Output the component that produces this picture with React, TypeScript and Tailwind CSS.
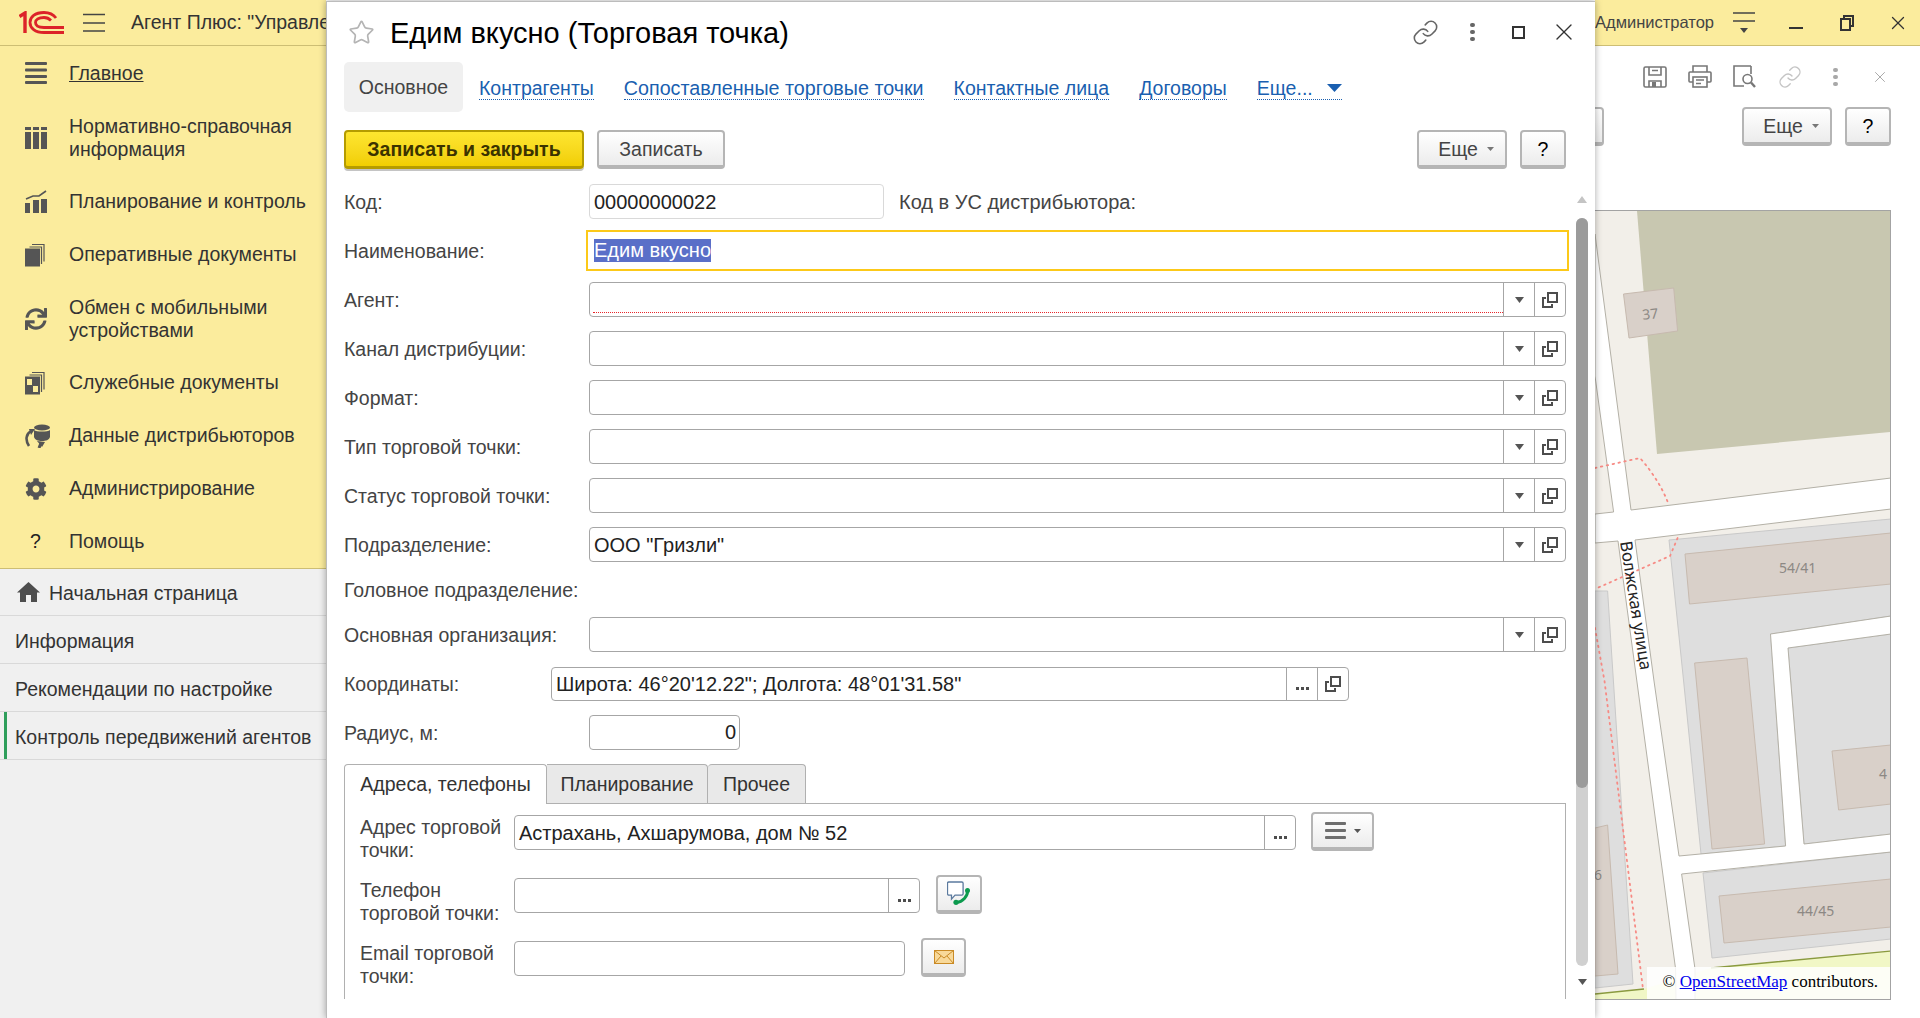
import { Link, Star, X } from "lucide-react";
import { FaCog, FaSync } from "react-icons/fa";

const DARK = "#555555";

function MainIcon() {
  return (
    <svg width="22" height="24" viewBox="0 0 22 24" fill={DARK}>
      <rect y="1" width="22" height="3" rx="1" />
      <rect y="7.5" width="22" height="3" rx="1" />
      <rect y="14" width="22" height="3" rx="1" />
      <rect y="20" width="22" height="3" rx="1" />
    </svg>
  );
}

function RefIcon() {
  return (
    <svg width="22" height="22" viewBox="0 0 22 22" fill={DARK}>
      <rect x="0" y="0" width="6" height="3" />
      <rect x="8" y="0" width="6" height="3" />
      <rect x="16" y="0" width="6" height="3" />
      <rect x="0" y="5" width="6" height="17" />
      <rect x="8" y="5" width="6" height="17" />
      <rect x="16" y="5" width="6" height="17" />
    </svg>
  );
}

function PlanIcon() {
  return (
    <svg width="22" height="24" viewBox="0 0 22 24" fill={DARK}>
      <path d="M0 13h5v10H0zM8 10h6v13H8zM16 9h6v14h-6z" />
      <path d="M1 9l7-3 6 0 7-5" fill="none" stroke={DARK} strokeWidth="1.6" />
    </svg>
  );
}

function DocsIcon({ squares }: { squares?: boolean }) {
  return (
    <svg width="20" height="24" viewBox="0 0 20 24" fill="none" stroke={DARK}>
      <path d="M7 1.5h12v17" strokeWidth="1.2" />
      <path d="M4.5 4h12v17" strokeWidth="1.2" />
      <rect x="0.5" y="6" width="14" height="17" fill={DARK} />
      {squares && <rect x="2" y="8" width="5" height="6" fill="#fbec9d" stroke="none" />}
      {squares && <rect x="8" y="15" width="5" height="6" fill="#fbec9d" stroke="none" />}
    </svg>
  );
}

function DistribIcon() {
  return (
    <svg width="26" height="24" viewBox="0 0 26 24" fill="none">
      <ellipse cx="17" cy="3.5" rx="8" ry="3" fill={DARK} />
      <path d="M9 6c2 2 14 2 16 0v7c-1 3-4 4-8 4s-7-1-8-4z" fill={DARK} />
      <path d="M6 7C1 10 0 16 4 22" stroke={DARK} strokeWidth="2.6" />
      <path d="M4 5l6 0-4 6z" fill={DARK} />
      <path d="M14 24l2-5" stroke={DARK} strokeWidth="3" />
      <path d="M12 17l8 1-3 5z" fill={DARK} />
    </svg>
  );
}

function OpenIcon() {
  return (
    <svg width="16" height="16" viewBox="0 0 16 16" fill="none" stroke="#4d4d4d" strokeWidth="2">
      <rect x="6" y="1" width="9" height="9" />
      <path d="M4 6H1v9h9v-3" />
    </svg>
  );
}

function Caret({ color = "#555555", w = 9, h = 6 }: { color?: string; w?: number; h?: number }) {
  return (
    <svg width={w} height={h} viewBox="0 0 9 6" preserveAspectRatio="none" fill={color}>
      <path d="M0 0h9L4.5 6z" />
    </svg>
  );
}

function Dots() {
  return (
    <span className="flex gap-[2px] mt-[9px]">
      <span className="w-[3px] h-[3px] bg-[#4d4d4d]" />
      <span className="w-[3px] h-[3px] bg-[#4d4d4d]" />
      <span className="w-[3px] h-[3px] bg-[#4d4d4d]" />
    </span>
  );
}

function VDots({ color }: { color: string }) {
  return (
    <span className="flex flex-col gap-[3px]">
      <span className="w-[5px] h-[4px] rounded-full" style={{ background: color }} />
      <span className="w-[5px] h-[4px] rounded-full" style={{ background: color }} />
      <span className="w-[5px] h-[4px] rounded-full" style={{ background: color }} />
    </span>
  );
}

function CellBtn({ children }: { children: React.ReactNode }) {
  return (
    <span className="w-[31px] h-full shrink-0 border-l border-[#a6a6a6] flex items-center justify-center">
      {children}
    </span>
  );
}

function Label({ text }: { text: string }) {
  return <div className="w-[245px] shrink-0 pt-[2px] text-[#444444]">{text}</div>;
}

function SelectField({ value, required }: { value?: string; required?: boolean }) {
  return (
    <div className="relative flex-1 h-[35px] rounded-[4px] border border-[#a6a6a6] flex items-center bg-white">
      <span className="flex-1 pl-[4px] pt-[2px] text-[20px] text-[#222222]">{value}</span>
      {required && (
        <span className="absolute left-[3px] right-[62px] bottom-[3px] border-b border-dotted border-[#e8262a]" />
      )}
      <CellBtn>
        <Caret />
      </CellBtn>
      <CellBtn>
        <OpenIcon />
      </CellBtn>
    </div>
  );
}

function SelectRow({ label, value, required, className }: { label: string; value?: string; required?: boolean; className: string }) {
  return (
    <div className={`flex items-center ${className}`}>
      <Label text={label} />
      <SelectField value={value} required={required} />
    </div>
  );
}

function GrayBtn({ className, children }: { className: string; children: React.ReactNode }) {
  return (
    <div
      className={`shrink-0 flex items-center justify-center rounded-[4px] border-2 border-[#b5b5b5] border-b-[4px] bg-linear-to-b from-white to-[#ececec] text-[#444444] ${className}`}
    >
      {children}
    </div>
  );
}

function MoreButtons() {
  return (
    <>
      <GrayBtn className="w-[90px] h-[39px] gap-[9px] pl-[8px] pt-[1px]">
        <span>Еще</span>
        <Caret color="#777777" w={7} h={4} />
      </GrayBtn>
      <GrayBtn className="w-[46px] h-[39px] ml-[13px] pt-[1px] text-black">?</GrayBtn>
    </>
  );
}

const MENU = [
  { h: "h-[54px]", lines: ["Главное"], icon: <MainIcon />, underline: true },
  { h: "h-[75px]", lines: ["Нормативно-справочная", "информация"], icon: <RefIcon /> },
  { h: "h-[53px]", lines: ["Планирование и контроль"], icon: <PlanIcon /> },
  { h: "h-[53px]", lines: ["Оперативные документы"], icon: <DocsIcon /> },
  { h: "h-[75px]", lines: ["Обмен с мобильными", "устройствами"], icon: <FaSync size={22} color={DARK} /> },
  { h: "h-[53px]", lines: ["Служебные документы"], icon: <DocsIcon squares /> },
  { h: "h-[53px]", lines: ["Данные дистрибьюторов"], icon: <DistribIcon /> },
  { h: "h-[53px]", lines: ["Администрирование"], icon: <FaCog size={22} color={DARK} /> },
  { h: "h-[54px] pb-[2px]", lines: ["Помощь"], icon: <span className="text-[#222222] ml-[5px]">?</span> },
];

function Sidebar() {
  return (
    <div className="w-[326px] shrink-0 flex flex-col bg-[#f0f0f0]">
      <div className="h-[46px] bg-[#fbec9d] border-b border-[#cdbe74] flex items-center whitespace-nowrap">
        <svg className="ml-[19px] shrink-0" width="45" height="23" viewBox="0 0 45 23" fill="none" stroke="#dc2329" strokeWidth="2.8">
          <path d="M0.5 5.5L6 2v20" strokeWidth="3.4" />
          <path d="M37 7C34 3 29 1.5 25 1.5 16 1.5 11 6 11 11.5S16 21.5 25 21.5H45" />
          <path d="M32 9.5C30 7.5 28 6.5 25 6.5 19.5 6.5 16.5 8.5 16.5 11.5S19.5 16.5 25 16.5H45" />
        </svg>
        <svg className="ml-[19px] shrink-0" width="22" height="20" viewBox="0 0 22 20" stroke="#444444" strokeWidth="1.6">
          <path d="M0 1.5h22M0 10h22M0 18h22" />
        </svg>
        <span className="ml-[26px] flex-1 min-w-0 overflow-hidden text-[#333333]">Агент Плюс: "Управление торговлей"</span>
      </div>
      <div className="bg-[#fbec9d] border-b border-[#cdbe74] h-[523px]">
        {MENU.map((item) => (
          <div key={item.lines[0]} className={`flex items-center ${item.h}`}>
            <div className="w-[69px] pl-[25px] shrink-0 flex items-center">{item.icon}</div>
            <div className={item.underline ? "underline text-[#333333]" : "text-[#333333]"}>
              {item.lines.map((l) => (
                <div key={l}>{l}</div>
              ))}
            </div>
          </div>
        ))}
      </div>
      <div className="h-[47px] border-b border-[#d9d9d9] flex items-center pl-[17px] gap-[9px] text-[#333333]">
        <svg width="23" height="20" viewBox="0 0 23 20" fill="#4d4d4d">
          <path d="M11.5 0L23 10.5h-3V20h-6v-7H9v7H3v-9.500H0z" />
        </svg>
        <span className="pt-[2px]">Начальная страница</span>
      </div>
      <div className="h-[48px] border-b border-[#d9d9d9] flex items-center pl-[15px] pt-[3px] text-[#333333]">Информация</div>
      <div className="h-[48px] border-b border-[#d9d9d9] flex items-center pl-[15px] pt-[3px] text-[#333333]">Рекомендации по настройке</div>
      <div className="h-[48px] border-b border-[#d9d9d9] flex items-center text-[#333333]">
        <span className="w-[3px] h-full ml-[4px] mr-[8px] bg-[#2f9e5b]" />
        <span className="pt-[3px] whitespace-nowrap">Контроль передвижений агентов</span>
      </div>
    </div>
  );
}

function Scrollbar() {
  return (
    <div className="w-[12px] ml-[10px] flex flex-col items-center">
      <div className="h-[34px] pt-[12px]">
        <svg width="10" height="7" viewBox="0 0 10 7" fill="#c4c4c4">
          <path d="M5 0l5 7H0z" />
        </svg>
      </div>
      <div className="w-[12px] h-[748px] rounded-full bg-[#d0d0d0]">
        <div className="w-[12px] h-[570px] rounded-full bg-[#9b9b9b]" />
      </div>
      <div className="pt-[13px]">
        <Caret color="#555555" />
      </div>
    </div>
  );
}

function Modal() {
  return (
    <div className="relative z-10 w-[1269px] shrink-0 mt-px bg-white border-l border-[#bcbcbc] border-t shadow-[0_0_7px_rgba(0,0,0,0.35)] pl-[17px] overflow-hidden">
      <div className="h-[60px] flex items-center">
        <Star size={27} strokeWidth={1.5} color="#b4b4b4" className="ml-[4px]" />
        <span className="ml-[15px] pt-[2px] text-[29px] text-black whitespace-nowrap">Едим вкусно (Торговая точка)</span>
        <Link size={27} strokeWidth={1.4} color="#666666" className="ml-auto" />
        <span className="ml-[31px]">
          <VDots color="#666666" />
        </span>
        <span className="ml-[37px] w-[13px] h-[13px] border-2 border-[#333333]" />
        <X size={28} strokeWidth={1.2} color="#333333" className="ml-[25px] mr-[17px]" />
      </div>

      <div className="h-[50px] flex items-center gap-[30px]">
        <div className="w-[119px] h-full rounded-[5px] bg-[#f0f0f0] flex items-center justify-center text-[#444444] -mr-[14px]">Основное</div>
        <span className="text-[#1a5fb0] border-b border-dotted border-[#1a5fb0] leading-[22px] mt-[2px]">Контрагенты</span>
        <span className="text-[19.7px] text-[#1a5fb0] border-b border-dotted border-[#1a5fb0] leading-[22px] mt-[2px]">Сопоставленные торговые точки</span>
        <span className="text-[#1a5fb0] border-b border-dotted border-[#1a5fb0] leading-[22px] mt-[2px]">Контактные лица</span>
        <span className="text-[#1a5fb0] border-b border-dotted border-[#1a5fb0] leading-[22px] mt-[2px]">Договоры</span>
        <span className="flex items-center gap-[14px] text-[#1a5fb0] border-b border-dotted border-[#1a5fb0] leading-[22px] mt-[2px]">
          Еще...
          <Caret color="#1a5fb0" w={15} h={8} />
        </span>
      </div>

      <div className="mt-[18px] h-[39px] flex w-[1222px]">
        <div className="w-[240px] h-[39px] flex items-center justify-center rounded-[4px] border-2 border-[#b59c00] border-b-[3px] bg-linear-to-b from-[#fee62f] to-[#f1ce00] font-bold text-[#3b3300] shadow-[0_2px_0_#c4c4c4]">
          Записать и закрыть
        </div>
        <GrayBtn className="w-[128px] h-[39px] ml-[13px] pt-[1px]">Записать</GrayBtn>
        <div className="ml-auto flex">
          <MoreButtons />
        </div>
      </div>

      <div className="mt-[15px] flex">
        <div className="w-[1222px] shrink-0">
          <div className="flex items-center h-[35px]">
            <Label text="Код:" />
            <div className="w-[295px] h-full rounded-[4px] border border-[#d9d9d9] flex items-center pl-[4px] pt-[2px] text-[20px] text-[#222222]">00000000022</div>
            <span className="ml-[15px] pt-[2px] text-[20px] text-[#444444]">Код в УС дистрибьютора:</span>
          </div>

          <div className="flex items-center h-[41px] mt-[11px]">
            <Label text="Наименование:" />
            <div className="flex-1 -ml-[3px] -mr-[3px] h-full border-2 border-[#fcc919] flex items-center pl-[6px]">
              <span className="bg-[#5a6fc8] text-white text-[20px] leading-[23px]">Едим вкусно</span>
            </div>
          </div>

          <SelectRow label="Агент:" required className="mt-[11px]" />
          <SelectRow label="Канал дистрибуции:" className="mt-[14px]" />
          <SelectRow label="Формат:" className="mt-[14px]" />
          <SelectRow label="Тип торговой точки:" className="mt-[14px]" />
          <SelectRow label="Статус торговой точки:" className="mt-[14px]" />
          <SelectRow label={"Подразделение:"} value={'ООО "Гризли"'} className="mt-[14px]" />

          <div className="h-[28px] mt-[14px] flex items-center text-[#444444]">Головное подразделение:</div>

          <SelectRow label="Основная организация:" className="mt-[13px]" />

          <div className="flex items-center mt-[15px] h-[34px]">
            <div className="w-[207px] shrink-0 pt-[1px] text-[#444444]">Координаты:</div>
            <div className="w-[798px] h-full rounded-[4px] border border-[#a6a6a6] flex items-center">
              <span className="flex-1 pl-[4px] text-[20px] text-[#222222]">Широта: 46°20'12.22"; Долгота: 48°01'31.58"</span>
              <CellBtn>
                <Dots />
              </CellBtn>
              <CellBtn>
                <OpenIcon />
              </CellBtn>
            </div>
          </div>

          <div className="flex items-center mt-[14px] h-[35px]">
            <Label text="Радиус, м:" />
            <div className="w-[151px] h-full rounded-[4px] border border-[#a6a6a6] flex items-center justify-end pr-[3px] text-[20px] text-[#222222]">0</div>
          </div>

          <div className="mt-[14px] h-[40px] flex items-end border-b border-[#b0b0b0]">
            <div className="relative top-px h-[40px] w-[203px] border border-b-0 border-[#b0b0b0] rounded-t-[4px] bg-white flex items-center justify-center text-[#333333]">
              Адреса, телефоны
            </div>
            <div className="h-[39px] w-[161px] border-t border-r border-[#b0b0b0] rounded-tr-[4px] bg-[#e9e9e9] flex items-center justify-center text-[#333333]">
              Планирование
            </div>
            <div className="h-[39px] w-[98px] border-t border-r border-[#b0b0b0] rounded-t-[4px] bg-[#e9e9e9] flex items-center justify-center text-[#333333]">
              Прочее
            </div>
          </div>

          <div className="h-[195px] border-l border-r border-[#b0b0b0] pt-[11px] pl-[15px] flex flex-col gap-[17px]">
            <div className="flex h-[46px]">
              <div className="w-[154px] shrink-0 pt-[1px] text-[#444444] whitespace-nowrap">
                Адрес торговой
                <br />
                точки:
              </div>
              <div className="w-[782px] h-[35px] rounded-[4px] border border-[#a6a6a6] flex items-center">
                <span className="flex-1 pl-[4px] pt-[2px] text-[20px] text-[#222222]">Астрахань, Ахшарумова, дом № 52</span>
                <CellBtn>
                  <Dots />
                </CellBtn>
              </div>
              <GrayBtn className="w-[63px] h-[39px] -mt-[3px] ml-[15px] gap-[8px]">
                <svg width="21" height="18" viewBox="0 0 21 18" fill="#6e6e6e">
                  <rect width="21" height="3" rx="1" />
                  <rect y="7" width="21" height="3" rx="1" />
                  <rect y="14" width="21" height="3" rx="1" />
                </svg>
                <Caret w={7} h={4} />
              </GrayBtn>
            </div>

            <div className="flex h-[46px]">
              <div className="w-[154px] shrink-0 pt-[1px] text-[#444444] whitespace-nowrap">
                Телефон
                <br />
                торговой точки:
              </div>
              <div className="w-[406px] h-[35px] rounded-[4px] border border-[#a6a6a6] flex items-center justify-end">
                <CellBtn>
                  <Dots />
                </CellBtn>
              </div>
              <GrayBtn className="w-[46px] h-[39px] -mt-[3px] ml-[16px]">
                <svg width="24" height="25" viewBox="0 0 24 25" fill="none">
                  <path d="M1.800 1h13a1.300 1.300 0 011.300 1.300v10.500a1.300 1.300 0 01-1.300 1.300H8l-3.500 4v-4H1.800a1.300 1.300 0 01-1.300-1.300V2.300A1.300 1.300 0 011.800 1z" fill="white" stroke="#5b7a9e" strokeWidth="1.3" />
                  <path d="M20.500 10C21 15 15.500 21 9.500 21.500" stroke="#0c9a4e" strokeWidth="3" />
                  <circle cx="20.500" cy="9.500" r="2.500" fill="#0c9a4e" />
                  <circle cx="9" cy="21.300" r="2.600" fill="#0c9a4e" />
                </svg>
              </GrayBtn>
            </div>

            <div className="flex h-[46px]">
              <div className="w-[154px] shrink-0 pt-[1px] text-[#444444] whitespace-nowrap">
                Email торговой
                <br />
                точки:
              </div>
              <div className="w-[391px] h-[35px] rounded-[4px] border border-[#a6a6a6]" />
              <GrayBtn className="w-[45px] h-[39px] -mt-[3px] ml-[16px]">
                <svg width="20" height="14" viewBox="0 0 20 14" fill="#f8d99a" stroke="#c98a25">
                  <rect x="0.5" y="0.5" width="19" height="13" />
                  <path d="M0.500 0.500L10 8l9.500-7.500M0.500 13.500L7 6M19.500 13.500L13 6" fill="none" />
                </svg>
              </GrayBtn>
            </div>
          </div>
        </div>
        <Scrollbar />
      </div>
    </div>
  );
}

function MapView() {
  const building = { fill: "#d9d0c9", stroke: "#c7baaf" };
  const gray = "#dedede";
  const label = { fill: "#8c8884", fontSize: 14, fontFamily: "'Noto Sans', sans-serif" };
  const red = { fill: "none", stroke: "#f78a84", strokeWidth: 1.8, strokeDasharray: "1.5 4.5", strokeLinecap: "round" as const };
  return (
    <div className="relative w-[296px] h-[790px] border-t border-r border-b border-[#a3a3a3] overflow-hidden">
      <svg width="296" height="790" viewBox="1595 210 296 790">
        <rect x="1595" y="210" width="296" height="790" fill="#f2efe9" />
        <polygon points="1637,210 1657,453 1891,431 1891,210" fill="#c8c7b0" />
        <polygon points="1623.500,293 1673.700,287 1677.600,330 1629,337" {...building} />
        <text x="1642" y="318" transform="rotate(-6 1650 312)" {...label}>37</text>

        <polygon points="1669,539 1891,518 1891,615 1770.500,633 1785.600,845 1701,853 1683.600,680" fill={gray} stroke="#c9c9c9" />
        <polygon points="1788,647 1891,633 1891,833 1804,843" fill={gray} stroke="#c9c9c9" />
        <polygon points="1703,872 1891,851 1891,938 1712,957" fill={gray} stroke="#c9c9c9" />
        <polygon points="1595,590 1607.600,590 1633,983 1595,987" fill={gray} stroke="#c9c9c9" />

        <polygon points="1685,553 1891,532 1891,583 1689.500,603" {...building} />
        <text x="1779" y="572" {...label}>54/41</text>
        <polygon points="1694.600,662 1747,657 1764.600,843 1712,848" {...building} />
        <polygon points="1832,750 1891,744 1891,803 1838.600,809" {...building} />
        <text x="1879" y="778" {...label}>4</text>
        <polygon points="1719,895 1891,878 1891,926 1724,942" {...building} />
        <text x="1797" y="915" {...label}>44/45</text>
        <polygon points="1595,827 1607.600,824 1618,973 1595,975" {...building} />
        <text x="1594" y="879" {...label}>6</text>

        <polygon points="1595,993 1644,988 1711,967 1891,950 1891,1000 1595,1000" fill="#f1f7c6" />
        <path d="M1595 993L1644 988M1711 967L1891 950" fill="none" stroke="#8a9a3f" strokeWidth="1.4" />

        <polygon
          points="1595,233 1631,509 1891,477 1891,508 1635,539 1654,680 1679,855 1785.600,845 1770.500,633 1891,615 1891,633 1788,647 1804,843 1891,833 1891,851 1681.600,873 1695,968 1695,1000 1676,1000 1675.600,968 1618,540 1595,542 1595,513 1613.600,511 1595,375"
          fill="white"
          stroke="#b3b0a6"
          strokeWidth="1"
        />

        <path d="M1595 467L1640 457Q1660 480 1668.500 503" {...red} />
        <path d="M1677.600 537L1670 555L1595 588" {...red} />
        <path d="M1595 627L1604.500 680L1643 988" {...red} />

        <text
          x="1620"
          y="541"
          transform="rotate(81 1620 541)"
          fill="#222222"
          fontSize="16.7"
          fontFamily="'Noto Sans', sans-serif"
        >
          Волжская улица
        </text>
      </svg>
      <div className="absolute right-0 bottom-0 w-[243px] h-[32px] bg-white/85 flex items-center justify-end pr-[12px] pb-[3px] font-['Liberation_Serif',serif] text-[17px] text-black whitespace-nowrap">
        ©&nbsp;<span className="text-[#0000ee] underline">OpenStreetMap</span>&nbsp;contributors.
      </div>
    </div>
  );
}

function RightPane() {
  return (
    <div className="flex-1 flex flex-col min-w-0">
      <div className="h-[46px] bg-[#fbec9d] border-b border-[#cdbe74] flex items-center text-[16.5px] text-[#444444] whitespace-nowrap">
        <span className="w-[138px]">Администратор</span>
        <svg width="22" height="22" viewBox="0 0 22 22" stroke="#444444" strokeWidth="1.6" fill="#444444">
          <path d="M0 1h22M0 9h22" />
          <path d="M7 16h8l-4 5z" stroke="none" />
        </svg>
        <span className="ml-[34px] w-[14px] h-[2px] bg-[#333333] mt-[11px]" />
        <svg className="ml-[37px]" width="14" height="16" viewBox="0 0 14 16" fill="none" stroke="#333333" strokeWidth="2">
          <rect x="1" y="4" width="9" height="11" />
          <path d="M4 4V1h9v10h-3" />
        </svg>
        <X size={22} strokeWidth={1.4} color="#333333" className="ml-[33px]" />
      </div>

      <div className="h-[61px] flex items-center">
        <svg className="ml-[48px]" width="24" height="22" viewBox="0 0 24 22" fill="none" stroke="#777777" strokeWidth="1.6">
          <path d="M2.500 1h19A1.500 1.500 0 0123 2.500v17a1.500 1.500 0 01-1.500 1.500h-19A1.500 1.500 0 011 19.500v-17A1.500 1.500 0 012.500 1z" />
          <path d="M6 1v8h12V1M9 4.500h6M6 21v-6h12v6" />
          <rect x="9" y="16" width="4" height="5" fill="#777777" stroke="none" />
        </svg>
        <svg className="ml-[21px]" width="24" height="23" viewBox="0 0 24 23" fill="none" stroke="#777777" strokeWidth="1.6">
          <path d="M5 7V1h14v6M5 17H2a1 1 0 01-1-1V8a1 1 0 011-1h20a1 1 0 011 1v8a1 1 0 01-1 1h-3" />
          <rect x="5" y="12" width="14" height="10" />
          <path d="M8 15h8M8 18.500h5" />
        </svg>
        <svg className="ml-[21px]" width="23" height="23" viewBox="0 0 23 23" fill="none" stroke="#777777" strokeWidth="1.6">
          <path d="M18 1H1v20h10M18 1v8" />
          <circle cx="14.500" cy="14" r="4.500" />
          <path d="M18 17.500l4 4.500" strokeWidth="2.400" />
        </svg>
        <Link size={24} strokeWidth={1.4} color="#c4c4c4" className="ml-[22px]" />
        <span className="ml-[31px]">
          <VDots color="#a8a8a8" />
        </span>
        <X size={18} strokeWidth={1.3} color="#a8a8a8" className="ml-[33px]" />
      </div>

      <div className="h-[39px] flex">
        <div className="w-[9px] h-[39px] rounded-r-[4px] border-2 border-l-0 border-[#b5b5b5] border-b-[4px] bg-linear-to-b from-white to-[#ececec]" />
        <div className="ml-auto mr-[29px] flex">
          <MoreButtons />
        </div>
      </div>

      <div className="mt-[64px]">
        <MapView />
      </div>
    </div>
  );
}

export default function App() {
  return (
    <div className="w-[1920px] h-[1018px] flex bg-white overflow-hidden font-['Liberation_Sans',Arial,sans-serif] text-[19.5px] leading-[23px]">
      <Sidebar />
      <Modal />
      <RightPane />
    </div>
  );
}
